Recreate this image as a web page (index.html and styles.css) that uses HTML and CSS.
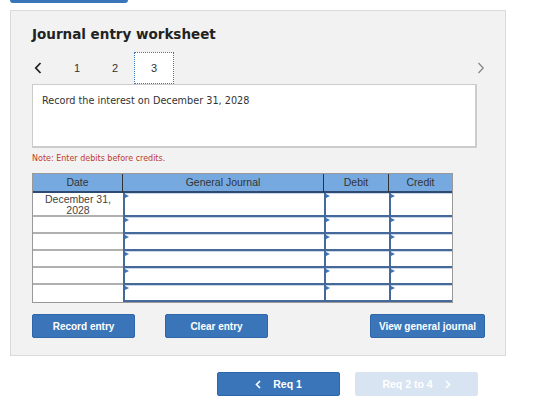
FILE: index.html
```html
<!DOCTYPE html>
<html lang="en">
<head>
    <meta charset="UTF-8">
    <title>Journal entry worksheet</title>
    <link rel="stylesheet" href="styles.css">
</head>
<body>
<div class="top-tab"></div>

<div class="worksheet">
    <h2 class="title">Journal entry worksheet</h2>

    <div class="tabs">
        <span class="arrow">
            <svg width="8" height="12" viewBox="0 0 8 12"><path d="M6.5 1 L1.8 6 L6.5 11" fill="none" stroke="#222" stroke-width="1.8"/></svg>
        </span>
        <span class="tab">1</span>
        <span class="tab">2</span>
        <span class="tab active">3</span>
        <span class="arrow right">
            <svg width="8" height="12" viewBox="0 0 8 12"><path d="M1.5 1 L6.2 6 L1.5 11" fill="none" stroke="#888" stroke-width="1.3"/></svg>
        </span>
    </div>

    <div class="prompt">Record the interest on December 31, 2028</div>

    <p class="note">Note: Enter debits before credits.</p>

    <div class="journal">
        <div class="head">Date</div>
        <div class="head">General Journal</div>
        <div class="head">Debit</div>
        <div class="head last">Credit</div>

        <div class="date first">December 31,<br>2028</div>
        <div class="entry first"></div>
        <div class="entry first"></div>
        <div class="entry first"></div>

        <div class="date"></div><div class="entry"></div><div class="entry"></div><div class="entry"></div>
        <div class="date"></div><div class="entry"></div><div class="entry"></div><div class="entry"></div>
        <div class="date"></div><div class="entry"></div><div class="entry"></div><div class="entry"></div>
        <div class="date"></div><div class="entry"></div><div class="entry"></div><div class="entry"></div>
        <div class="date last-row"></div><div class="entry"></div><div class="entry"></div><div class="entry"></div>
    </div>

    <div class="actions">
        <button class="btn">Record entry</button>
        <button class="btn">Clear entry</button>
        <button class="btn wide">View general journal</button>
    </div>
</div>

<div class="nav">
    <button class="btn nav-btn">
        <svg width="6" height="9" viewBox="0 0 6 9"><path d="M5 1 L1.5 4.5 L5 8" fill="none" stroke="#fff" stroke-width="1.6"/></svg>
        <span>Req 1</span>
    </button>
    <button class="btn nav-btn off">
        <span>Req 2 to 4</span>
        <svg width="6" height="9" viewBox="0 0 6 9"><path d="M1 1 L4.5 4.5 L1 8" fill="none" stroke="#fff" stroke-width="1.6"/></svg>
    </button>
</div>
</body>
</html>
```

FILE: styles.css
```css
body {
    margin: 0;
    background: #fff;
    font-family: "Liberation Sans", Arial, sans-serif;
}

.top-tab {
    margin-left: 10px;
    width: 118px;
    height: 3px;
    background: #3a75b9;
    border-radius: 0 0 3px 3px;
}

.worksheet {
    margin: 7px 0 0 10px;
    width: 473px;
    height: 344px;
    padding: 0 0 0 21px;
    background: #f2f2f2;
    border: 1px solid #dadada;
}

.title {
    margin: 15px 0 0 0;
    font-family: "DejaVu Sans", Verdana, sans-serif;
    font-size: 13.5px;
    font-weight: bold;
    color: #222;
    height: 18px;
}

.tabs {
    display: flex;
    align-items: center;
    height: 32px;
    margin-top: 8px;
    width: 453px;
    position: relative;
    z-index: 1;
}

.arrow {
    width: 24px;
    padding-left: 2px;
    display: flex;
    align-items: center;
}

.arrow.right {
    margin-left: auto;
    width: auto;
}

.tab {
    width: 38px;
    text-align: center;
    font-size: 11px;
    color: #333;
}

.tab.active {
    height: 30px;
    line-height: 30px;
    background: #fff;
    border: 1px dotted #3a75b9;
}

.prompt {
    box-sizing: border-box;
    width: 445px;
    height: 64px;
    background: #fff;
    border: 1px solid #ccc;
    border-width: 1px 2px 2px 1px;
    padding: 10px 9px;
    font-family: "DejaVu Sans", Verdana, sans-serif;
    font-size: 9.7px;
    color: #333;
}

.note {
    margin: 6px 0 0 0;
    font-family: "DejaVu Sans", Verdana, sans-serif;
    font-size: 8px;
    color: #c0392b;
}

.journal {
    margin-top: 10px;
    width: 421px;
    display: grid;
    grid-template-columns: 90px 201px 65px 63px;
    grid-template-rows: 19px 24px 17px 17px 17px 17px 17px;
    border: 1px solid #999;
    box-sizing: border-box;
}

.head {
    background: #76a9df;
    border-right: 1px solid #333;
    border-bottom: 2px solid #2f4a70;
    text-align: center;
    font-size: 10.5px;
    color: #333;
    line-height: 17px;
}

.head.last {
    border-right: none;
}

.date {
    background: #fff;
    border-bottom: 2px solid #b0b0b0;
    text-align: center;
    font-size: 10.5px;
    color: #444;
    line-height: 11px;
    padding-top: 1px;
}

.date.last-row {
    border-bottom: none;
}

.entry {
    position: relative;
    background: #fff;
    border-left: 2px solid #46699c;
    border-bottom: 2px solid #46699c;
    box-shadow: inset 0 1px 0 #c9d6e8;
}

.entry::before {
    content: "";
    position: absolute;
    left: 0;
    top: 1px;
    border-left: 4px solid #3a75b9;
    border-top: 2px solid transparent;
    border-bottom: 2px solid transparent;
}

.actions {
    display: flex;
    margin-top: 11px;
    width: 453px;
}

.btn {
    height: 24px;
    width: 103px;
    background: #3a75b9;
    color: #fff;
    border: 1px solid #2f66a8;
    border-radius: 2px;
    font-family: "Liberation Sans", Arial, sans-serif;
    font-size: 10px;
    font-weight: bold;
    cursor: pointer;
    padding: 0;
}

.actions .btn + .btn {
    margin-left: 30px;
}

.actions .btn.wide {
    margin-left: auto;
    width: 115px;
}

.nav {
    display: flex;
    gap: 15px;
    margin: 16px 0 0 217px;
}

.nav-btn {
    width: 123px;
    font-size: 10.5px;
    display: flex;
    align-items: center;
    justify-content: center;
    gap: 12px;
}

.nav-btn.off {
    background: #d8e4f1;
    border-color: #d8e4f1;
    color: #fff;
}
```
